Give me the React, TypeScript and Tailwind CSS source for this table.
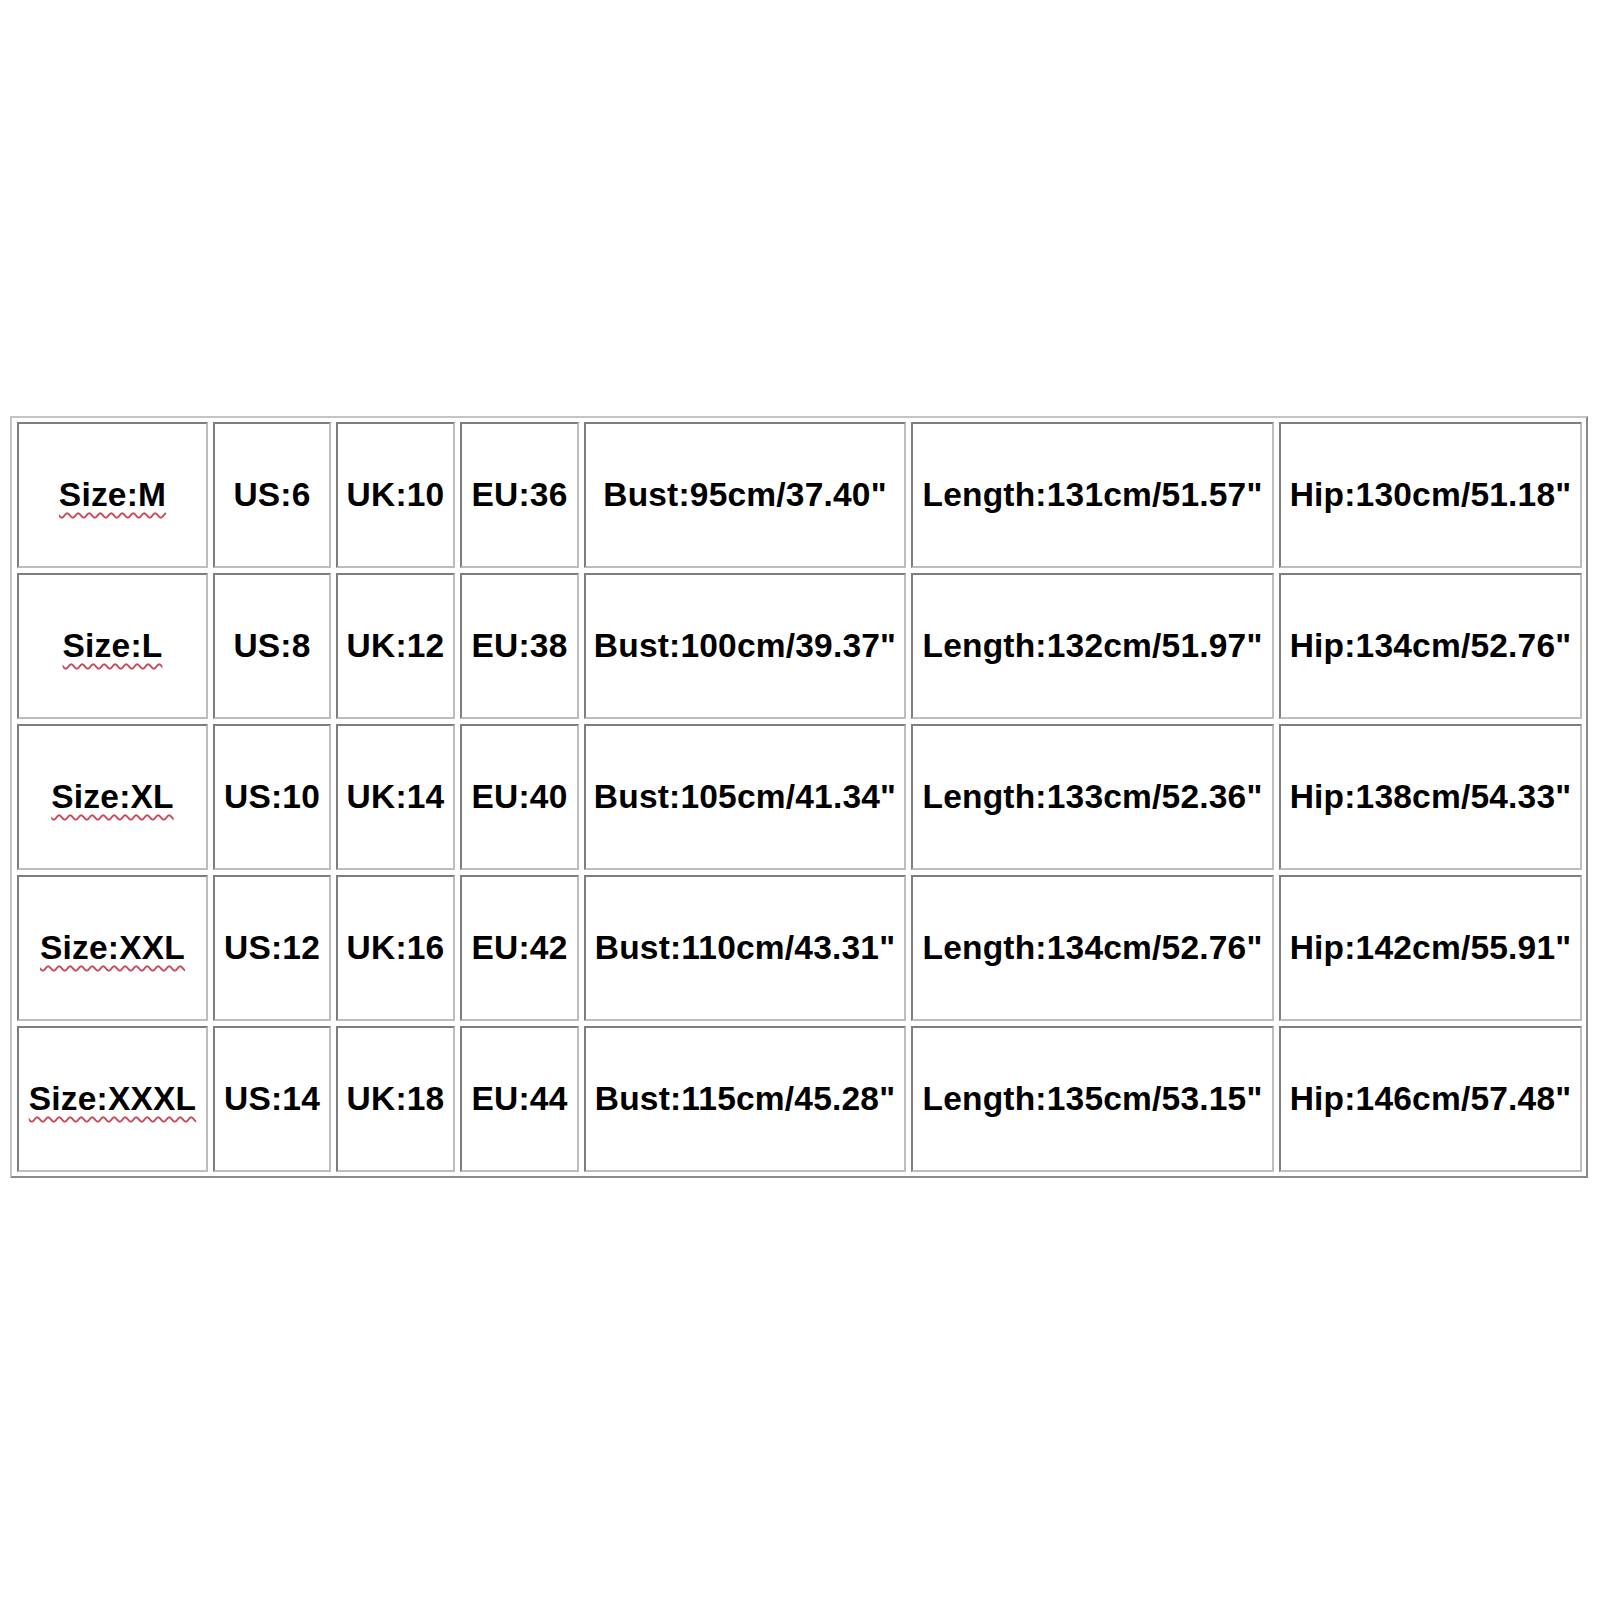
const rows = [
  ["Size:M", "US:6", "UK:10", "EU:36", 'Bust:95cm/37.40"', 'Length:131cm/51.57"', 'Hip:130cm/51.18"'],
  ["Size:L", "US:8", "UK:12", "EU:38", 'Bust:100cm/39.37"', 'Length:132cm/51.97"', 'Hip:134cm/52.76"'],
  ["Size:XL", "US:10", "UK:14", "EU:40", 'Bust:105cm/41.34"', 'Length:133cm/52.36"', 'Hip:138cm/54.33"'],
  ["Size:XXL", "US:12", "UK:16", "EU:42", 'Bust:110cm/43.31"', 'Length:134cm/52.76"', 'Hip:142cm/55.91"'],
  ["Size:XXXL", "US:14", "UK:18", "EU:44", 'Bust:115cm/45.28"', 'Length:135cm/53.15"', 'Hip:146cm/57.48"'],
];

export default function App() {
  return (
    <div className="min-h-[1600px] w-[1600px] bg-white pt-[416px] pl-[10px] font-['Liberation_Sans',Arial,sans-serif]">
      {/* size chart, old-style bordered html table look */}
      <div className="inline-block border-2 border-t-[#c4c4c4] border-l-[#c4c4c4] border-r-[#8a8a8a] border-b-[#8a8a8a] pt-[4px] pl-[5px] pr-[4px] pb-[4px]">
        <div className="grid grid-cols-[191px_118px_119px_119px_322px_363px_303px] auto-rows-[146px] gap-x-[5px] gap-y-[5px]">
          {rows.map((row, i) =>
            row.map((cell, j) => (
              <div
                key={i + "-" + j}
                className="flex items-center justify-center border-2 border-t-[#7e7e7e] border-l-[#7e7e7e] border-r-[#bdbdbd] border-b-[#bdbdbd] text-[33.5px] font-bold text-black whitespace-nowrap tracking-[0.2px]"
              >
                {j === 0 ? (
                  <span className="underline decoration-wavy decoration-[#c9485a] decoration-[1.5px] underline-offset-[6px]">
                    {cell}
                  </span>
                ) : (
                  <span>{cell}</span>
                )}
              </div>
            ))
          )}
        </div>
      </div>
    </div>
  );
}
